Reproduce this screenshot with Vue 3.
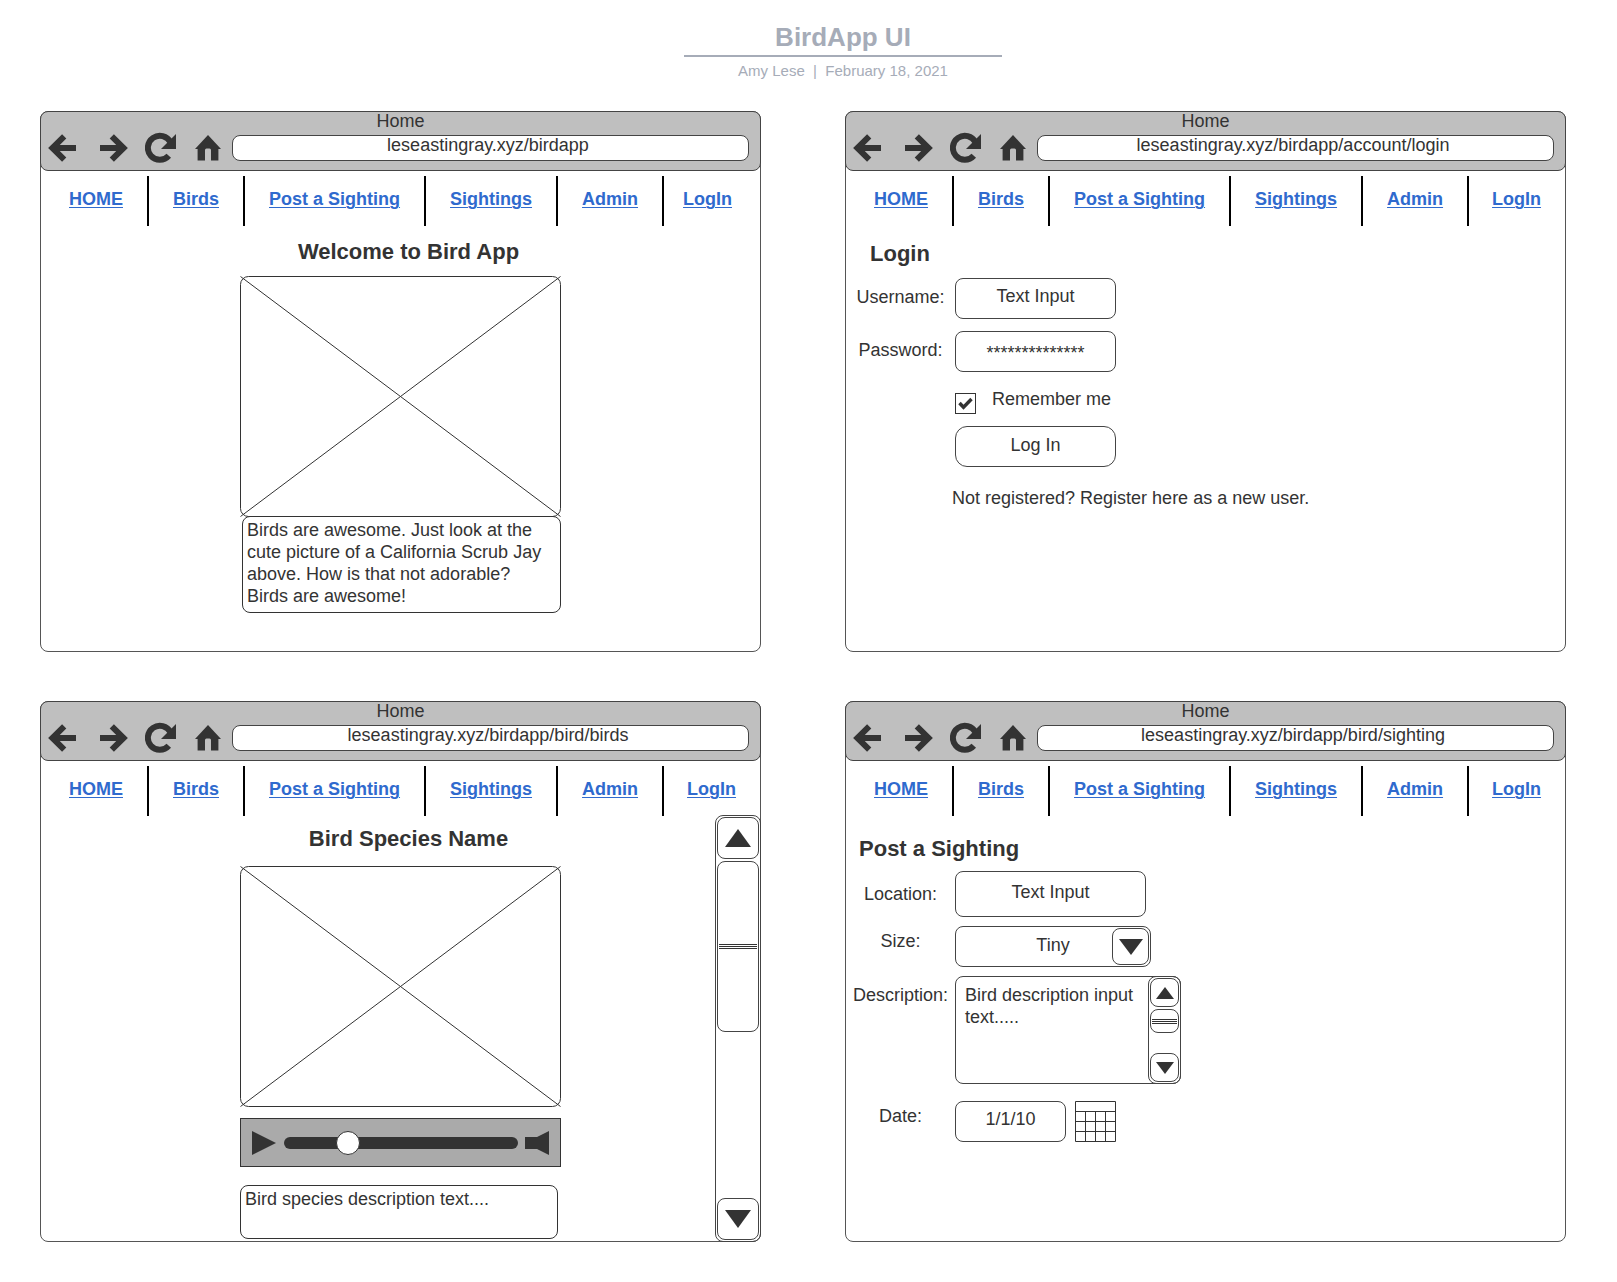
<script setup>
import { ref } from 'vue'

const links = ['HOME', 'Birds', 'Post a Sighting', 'Sightings', 'Admin', 'LogIn']

const screens = [
  { id: 'home', url: 'leseastingray.xyz/birdapp' },
  { id: 'login', url: 'leseastingray.xyz/birdapp/account/login' },
  { id: 'bird', url: 'leseastingray.xyz/birdapp/bird/birds' },
  { id: 'sighting', url: 'leseastingray.xyz/birdapp/bird/sighting' },
]

const username = ref('Text Input')
const password = ref('**************')
const remember = ref(true)
const playback = ref(25)
const location = ref('Text Input')
const size = ref('Tiny')
const description = ref('Bird description input text.....')
const date = ref('1/1/10')
</script>

<template>
  <div class="page">
    <header class="doc-head">
      <h1>BirdApp UI</h1>
      <p class="byline">Amy Lese&nbsp; |&nbsp; February 18, 2021</p>
    </header>

    <main class="screens">
      <section v-for="screen in screens" :key="screen.id" class="window" :class="screen.id">
        <div class="chrome">
          <div class="tab-title">Home</div>
          <div class="toolbar">
            <button type="button" class="tool back" aria-label="Back">
              <svg width="28" height="28" viewBox="0 0 28 28" fill="none" stroke="#333" stroke-width="6">
                <path d="M16.2 2.3 4.4 14l11.8 11.7M5 14h23" />
              </svg>
            </button>
            <button type="button" class="tool forward" aria-label="Forward">
              <svg width="28" height="28" viewBox="0 0 28 28" fill="none" stroke="#333" stroke-width="6">
                <path d="M11.8 2.3 23.6 14 11.8 25.7M23 14H0" />
              </svg>
            </button>
            <button type="button" class="tool reload" aria-label="Reload">
              <svg width="31" height="32" viewBox="0 0 31 32">
                <path d="M23.8 23.8A12 12 0 1 1 25.5 10.2" fill="none" stroke="#333" stroke-width="6" />
                <path d="M31 2v15H16z" fill="#333" />
              </svg>
            </button>
            <button type="button" class="tool house" aria-label="Home page">
              <svg width="26" height="26" viewBox="0 0 26 26" fill="#333">
                <path d="M13 0 26 14h-2.600v11.500H16V15q0-1.500-1.500-1.500h-3Q10 13.500 10 15v10.500H2.600V14H0z" />
              </svg>
            </button>
            <input class="url" type="text" aria-label="Address" :value="screen.url" />
          </div>
        </div>

        <nav class="menu">
          <a v-for="link in links" :key="link" href="#">{{ link }}</a>
        </nav>

        <div v-if="screen.id === 'home'" class="stage">
          <h2>Welcome to Bird App</h2>
          <div class="column">
            <svg class="picture" width="321" height="241" viewBox="0 0 321 241" role="img" aria-label="Picture" fill="none" stroke="#333">
              <rect x=".5" y=".5" width="320" height="240" rx="8" />
              <path d="M.5.5l320 240M320.500.5l-320 240" />
            </svg>
            <p class="note intro">
              Birds are awesome. Just look at the cute picture of a California Scrub Jay above. How is that not
              adorable? Birds are awesome!
            </p>
          </div>
        </div>

        <form v-else-if="screen.id === 'login'" class="form" @submit.prevent>
          <h2>Login</h2>
          <label for="username">Username:</label>
          <input id="username" v-model="username" class="box short" type="text" />
          <label for="password">Password:</label>
          <input id="password" v-model="password" class="box short stars" type="text" />
          <div class="field remember">
            <input id="remember" v-model="remember" type="checkbox" />
            <label for="remember">Remember me</label>
          </div>
          <button type="submit" class="box short submit">Log In</button>
          <p class="register">Not registered? Register here as a new user.</p>
        </form>

        <div v-else-if="screen.id === 'bird'" class="scroll-area">
          <div class="stage">
            <h2>Bird Species Name</h2>
            <div class="column">
              <svg class="picture" width="321" height="241" viewBox="0 0 321 241" role="img" aria-label="Picture" fill="none" stroke="#333">
                <rect x=".5" y=".5" width="320" height="240" rx="8" />
                <path d="M.5.5l320 240M320.500.5l-320 240" />
              </svg>
              <div class="player">
                <button type="button" class="tool" aria-label="Play">
                  <svg width="24" height="24" viewBox="0 0 24 24" fill="#333"><path d="M0 0l24 12L0 24z" /></svg>
                </button>
                <input v-model="playback" class="track" type="range" min="0" max="100" aria-label="Position" />
                <button type="button" class="tool" aria-label="Volume">
                  <svg width="24" height="24" viewBox="0 0 24 24" fill="#333"><path d="M0 6h12L24 0v24l-12-6H0z" /></svg>
                </button>
              </div>
              <p class="note species">Bird species description text....</p>
            </div>
          </div>
          <div class="scrollbar wide">
            <button type="button" class="cap" aria-label="Scroll up">
              <svg width="26" height="18" viewBox="0 0 26 18" fill="#333"><path d="M13 0l13 18H0z" /></svg>
            </button>
            <div class="thumb"><span class="grip"></span></div>
            <button type="button" class="cap last" aria-label="Scroll down">
              <svg width="26" height="18" viewBox="0 0 26 18" fill="#333"><path d="M0 0h26L13 18z" /></svg>
            </button>
          </div>
        </div>

        <form v-else class="form" @submit.prevent>
          <h2>Post a Sighting</h2>
          <label for="location" class="low">Location:</label>
          <input id="location" v-model="location" class="box long" type="text" />
          <label for="size" class="high">Size:</label>
          <div class="field picker">
            <select id="size" v-model="size" class="box">
              <option>Tiny</option>
              <option>Small</option>
              <option>Medium</option>
              <option>Large</option>
            </select>
            <span class="drop" aria-hidden="true">
              <svg width="24" height="16" viewBox="0 0 24 16" fill="#333"><path d="M0 0h24L12 16z" /></svg>
            </span>
          </div>
          <label for="description">Description:</label>
          <div class="field area">
            <textarea id="description" v-model="description"></textarea>
            <div class="scrollbar narrow">
              <button type="button" class="cap" aria-label="Scroll up">
                <svg width="18" height="12" viewBox="0 0 18 12" fill="#333"><path d="M9 0l9 12H0z" /></svg>
              </button>
              <div class="thumb"><span class="grip"></span></div>
              <button type="button" class="cap last" aria-label="Scroll down">
                <svg width="18" height="12" viewBox="0 0 18 12" fill="#333"><path d="M0 0h18L9 12z" /></svg>
              </button>
            </div>
          </div>
          <label for="date" class="high date-label">Date:</label>
          <div class="field when">
            <input id="date" v-model="date" class="box" type="text" />
            <button type="button" class="tool" aria-label="Open calendar">
              <svg width="41" height="41" viewBox="0 0 41 41" fill="none" stroke="#333">
                <path d="M.5.5h40v40H.5zM.5 10.500h40M.5 20.500h40M.5 30.500h40M10.500 10.500v30M20.500 10.500v30M30.500 10.500v30" />
              </svg>
            </button>
          </div>
        </form>
      </section>
    </main>
  </div>
</template>

<style>
body {
  background: #fff;
}
</style>

<style scoped>
.page {
  padding: 22px 51px 39px 40px;
  font-family: "Liberation Sans", Arial, sans-serif;
  font-size: 18px;
  line-height: 22px;
  color: #333;
}
.page *,
.page *::before {
  box-sizing: border-box;
}
h1,
h2,
p {
  margin: 0;
}
button,
input,
select,
textarea {
  margin: 0;
  padding: 0;
  border: 0;
  border-radius: 0;
  background: none;
  font: inherit;
  color: inherit;
  outline: none;
}
svg {
  display: block;
}

/* Document title */
.doc-head {
  display: flex;
  flex-direction: column;
  align-items: center;
  padding-left: 80px;
  color: #a6acb8;
}
h1 {
  width: 318px;
  padding-bottom: 3px;
  border-bottom: 2px solid #a6acb8;
  font-size: 26px;
  line-height: 30px;
  text-align: center;
}
.byline {
  padding-top: 5px;
  font-size: 15px;
  line-height: 18px;
}

/* Browser windows */
.screens {
  display: grid;
  grid-template-columns: 1fr 1fr;
  gap: 49px 84px;
  margin-top: 31px;
}
.window {
  display: flex;
  flex-direction: column;
  border: 1px solid #555;
  border-radius: 8px;
}
.chrome {
  margin: -1px -1px 0;
  padding-bottom: 9px;
  border: 1px solid #444;
  border-radius: 8px;
  background: #bfbfbf;
}
.tab-title {
  line-height: 18px;
  text-align: center;
}
.toolbar {
  display: flex;
  align-items: center;
  height: 31px;
  padding: 5px 11px 0 7px;
}
.tool {
  flex: none;
  cursor: pointer;
}
.back {
  margin-right: 24px;
}
.forward {
  margin-right: 17px;
}
.reload {
  margin-right: 19px;
}
.house {
  margin-right: 11px;
}
.url {
  flex: 1;
  min-width: 0;
  height: 26px;
  padding: 0 5px 5px 0;
  border: 1px solid #444;
  border-radius: 8px;
  background: #fff;
  text-align: center;
}

.menu {
  display: flex;
  height: 50px;
  margin: 5px 0 0 4px;
  font-weight: bold;
}
.menu a {
  padding: 12px 24px 0;
  color: #2f6ace;
  text-decoration-thickness: 1px;
  text-underline-offset: 2px;
  white-space: nowrap;
}
.menu a + a {
  border-left: 2px solid #000;
}
.menu a:last-child {
  padding-left: 23px;
}
.home .menu a:last-child {
  padding-left: 19px;
}

h2 {
  font-size: 22px;
  line-height: 28px;
}

/* Picture pages */
.stage {
  display: flex;
  flex: 1;
  flex-direction: column;
  align-items: center;
}
.stage h2 {
  padding-left: 16px;
}
.home .stage {
  padding: 12px 0 38px;
}
.home h2 {
  margin-bottom: 10px;
}
.column {
  width: 321px;
}
.note {
  width: 318px;
  padding: 2px 12px 0 4px;
  border: 1px solid #333;
  border-radius: 8px;
}
.intro {
  width: 319px;
  min-height: 97px;
  margin: -1px 0 0 2px;
}
.scroll-area {
  display: flex;
  flex: 1;
}
.bird .stage {
  padding: 9px 0 2px 44px;
}
.bird h2 {
  margin-bottom: 13px;
}
.species {
  min-height: 54px;
  margin-top: 18px;
}

.player {
  display: flex;
  align-items: center;
  justify-content: space-between;
  height: 49px;
  margin-top: 11px;
  padding: 0 11px;
  border: 1px solid #333;
  background: #aaa;
}
.track {
  width: 234px;
  height: 24px;
  appearance: none;
  cursor: pointer;
}
.track::-webkit-slider-runnable-track {
  height: 12px;
  border-radius: 6px;
  background: #333;
}
.track::-webkit-slider-thumb {
  width: 24px;
  height: 24px;
  margin-top: -6px;
  border: 1px solid #333;
  border-radius: 50%;
  background: #fff;
  appearance: none;
}

/* Scroll bars */
.scrollbar {
  display: flex;
  flex: none;
  flex-direction: column;
  gap: 2px;
  margin: -1px;
  padding: 1px;
  border: 1px solid #444;
  border-radius: 8px;
}
.wide {
  width: 46px;
}
.narrow {
  width: 33px;
}
.cap,
.thumb {
  display: flex;
  flex: none;
  align-items: center;
  justify-content: center;
  border: 1px solid #444;
  border-radius: 8px;
}
.cap {
  height: 42px;
  cursor: pointer;
}
.narrow .cap {
  height: 29px;
}
.last {
  margin-top: auto;
}
.thumb {
  height: 171px;
  padding: 0 1px;
}
.narrow .thumb {
  height: 24px;
}
.grip {
  width: 100%;
  height: 5px;
  border: solid #333;
  border-width: 1px 0;
  background: linear-gradient(#333, #333) 0 1px / 100% 1px no-repeat;
}

/* Forms */
.form {
  display: grid;
  grid-template-columns: 109px 1fr;
  align-content: start;
  justify-items: start;
}
.form h2 {
  grid-column: 1 / -1;
}
.login .form {
  row-gap: 12px;
}
.login h2 {
  margin: 14px 0 -2px 24px;
}
.sighting .form {
  row-gap: 9px;
}
.sighting h2 {
  margin: 19px 0 -1px 13px;
}
.form > label {
  justify-self: center;
  padding-top: 8px;
}
.form > .low {
  padding-top: 12px;
}
.form > .high {
  padding-top: 4px;
}
.box {
  height: 41px;
  padding-bottom: 4px;
  border: 1px solid #444;
  border-radius: 8px;
  text-align: center;
}
.short {
  width: 161px;
}
.long {
  width: 191px;
  height: 46px;
}
.stars {
  padding: 4px 0 0;
}
.field {
  display: flex;
  grid-column: 2;
}
.remember {
  align-items: flex-end;
  height: 30px;
}
.remember label {
  padding: 0 0 4px 16px;
}
.remember input {
  width: 21px;
  height: 21px;
  border: 1px solid #333;
  appearance: none;
}
.remember input:checked {
  background: url("data:image/svg+xml,%3Csvg xmlns='http://www.w3.org/2000/svg' viewBox='0 0 19 19'%3E%3Cpath d='M3.500 9l4 4.200L15.500 5' fill='none' stroke='%23333' stroke-width='3.400'/%3E%3C/svg%3E") center / 19px 19px no-repeat;
}
.submit {
  grid-column: 2;
  border-radius: 12px;
  cursor: pointer;
}
.register {
  grid-column: 2;
  margin: 8px 0 0 -3px;
}

.picker {
  position: relative;
}
.picker select {
  width: 196px;
  appearance: none;
  text-align-last: center;
}
.drop {
  position: absolute;
  top: 2px;
  right: 2px;
  bottom: 2px;
  display: flex;
  align-items: center;
  justify-content: center;
  width: 37px;
  border: 1px solid #444;
  border-radius: 8px;
  pointer-events: none;
}
.area {
  width: 226px;
  height: 108px;
  border: 1px solid #444;
  border-radius: 8px;
}
.area textarea {
  flex: 1;
  min-width: 0;
  padding: 7px 8px 0 9px;
  resize: none;
}
.when {
  gap: 9px;
}
.when,
.date-label {
  margin-top: 8px;
}
.when input {
  width: 111px;
}
</style>
